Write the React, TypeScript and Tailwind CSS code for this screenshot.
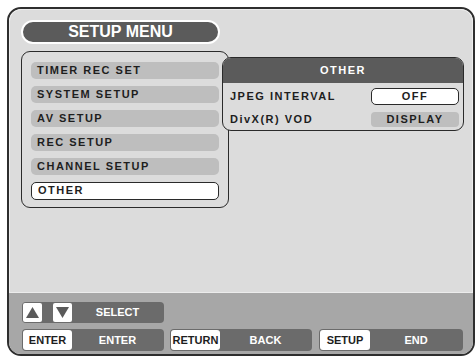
import React from "react";

const font = { fontFamily: '"Liberation Sans", Arial, sans-serif' };

function MenuItem({ label, active }: { label: string; active?: boolean }) {
  return (
    <div
      className={
        "h-[17px] flex items-center pl-[6px] rounded-[5px] text-[11px] font-bold tracking-[1.5px] text-[#1e1e1e] " +
        (active ? "bg-white border-[1.5px] border-[#2a2a2a] h-[18px] pl-[5px]" : "bg-[#bebebe]")
      }
    >
      {label}
    </div>
  );
}

function Group({ children, w, h }: { children: React.ReactNode; w: string; h: string }) {
  return (
    <div className={"bg-[#6b6b6b] rounded-[4px] flex items-center p-[1px] " + w + " " + h}>
      {children}
    </div>
  );
}

function KeyBox({ label, w }: { label: string; w: string }) {
  return (
    <div
      className={
        "h-full bg-white rounded-[3px] flex items-center justify-center text-[11px] font-bold text-[#1e1e1e] " + w
      }
    >
      {label}
    </div>
  );
}

function Tri({ up }: { up?: boolean }) {
  return (
    <div className="w-[19px] h-[19px] bg-white rounded-[2px] flex items-center justify-center">
      <svg width="13" height="11" viewBox="0 0 13 11">
        {up ? (
          <polygon points="6.5,0 13,11 0,11" fill="#5a5a5a" />
        ) : (
          <polygon points="0,0 13,0 6.5,11" fill="#5a5a5a" />
        )}
      </svg>
    </div>
  );
}

export default function App() {
  return (
    <div className="w-[476px] h-[359px] bg-white relative" style={font}>
      <div className="absolute left-[7px] top-[7px] w-[468px] h-[349px] border-2 border-[#2e2e2e] rounded-[14px] overflow-hidden flex flex-col">
        <div className="flex-1 bg-[#dcdcdc] border border-[#ececec] rounded-t-[12px] flex flex-col pl-[11px] pt-[10px]">
          <div className="w-[199px] h-[24px] rounded-full bg-[#5b5b5b] border-2 border-white flex items-center justify-center text-white text-[16px] font-bold">
            SETUP MENU
          </div>
          <div className="flex items-start mt-[7px]">
            <div className="w-[208px] border-[1.5px] border-[#2a2a2a] rounded-[9px] bg-[#dcdcdc] px-[9px] pt-[9.5px] pb-[7px] flex flex-col gap-[7px]">
              <MenuItem label="TIMER REC SET" />
              <MenuItem label="SYSTEM SETUP" />
              <MenuItem label="AV SETUP" />
              <MenuItem label="REC SETUP" />
              <MenuItem label="CHANNEL SETUP" />
              <MenuItem label="OTHER" active />
            </div>
            <div className="relative ml-[-7px] mt-[6px] w-[242px] h-[74px] border-[1.5px] border-[#2a2a2a] rounded-[9px] bg-[#dcdcdc] overflow-hidden flex flex-col">
              <div className="h-[25px] bg-[#5b5b5b] flex items-center justify-center text-white text-[11px] font-bold tracking-[1.5px]">
                OTHER
              </div>
              <div className="flex items-center justify-between pl-[7px] pr-[4px] mt-[5px] h-[17px]">
                <span className="text-[11px] font-bold tracking-[1.5px] text-[#1e1e1e]">JPEG INTERVAL</span>
                <div className="w-[88px] h-[17px] bg-white border-[1.5px] border-[#2a2a2a] rounded-[5px] flex items-center justify-center text-[11px] font-bold tracking-[1.5px] text-[#1e1e1e]">
                  OFF
                </div>
              </div>
              <div className="flex items-center justify-between pl-[7px] pr-[4px] mt-[7px] h-[15px]">
                <span className="text-[11px] font-bold tracking-[1.5px] text-[#1e1e1e]">DivX(R) VOD</span>
                <div className="w-[88px] h-[15px] bg-[#bebebe] rounded-[4px] flex items-center justify-center text-[11px] font-bold tracking-[1.5px] text-[#1e1e1e]">
                  DISPLAY
                </div>
              </div>
            </div>
          </div>
        </div>
        <div className="h-[61px] bg-[#a7a7a7] flex flex-col gap-[6px] pl-[13px] pt-[9px]">
          <Group w="w-[142px]" h="h-[21px]">
            <div className="flex gap-[11px] h-full items-center">
              <Tri up />
              <Tri />
            </div>
            <div className="flex-1 text-center text-white text-[11px] font-bold">SELECT</div>
          </Group>
          <div className="flex gap-[6px]">
            <Group w="w-[142px]" h="h-[22px]">
              <KeyBox label="ENTER" w="w-[49px]" />
              <div className="flex-1 text-center text-white text-[11px] font-bold">ENTER</div>
            </Group>
            <Group w="w-[142px]" h="h-[22px]">
              <KeyBox label="RETURN" w="w-[49px]" />
              <div className="flex-1 text-center text-white text-[11px] font-bold">BACK</div>
            </Group>
            <Group w="w-[144px] ml-[1px]" h="h-[22px]">
              <KeyBox label="SETUP" w="w-[50px]" />
              <div className="flex-1 text-center text-white text-[11px] font-bold">END</div>
            </Group>
          </div>
        </div>
      </div>
    </div>
  );
}
